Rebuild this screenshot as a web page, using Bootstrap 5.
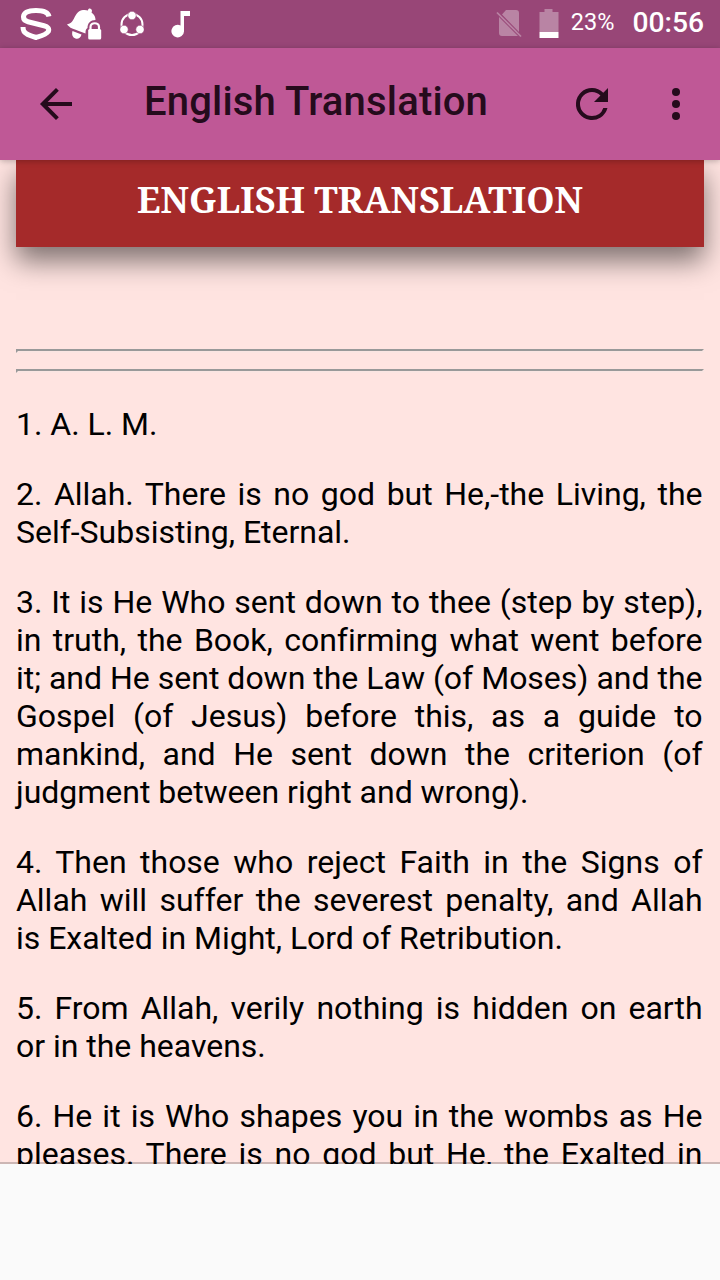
<!DOCTYPE html>
<html lang="en">
<head>
<meta charset="utf-8">
<meta name="viewport" content="width=device-width, initial-scale=1">
<title>English Translation</title>
<link rel="stylesheet" href="https://cdn.jsdelivr.net/npm/bootstrap@5.3.0/dist/css/bootstrap.min.css">
<style>
  body { font-family: Roboto, "Noto Sans", sans-serif; background: #fafafa; color: #000; }
  .screen { height: 1280px; }
  .status-bar { height: 48px; background: #984677; color: #fff; padding: 0 16px 0 20px; }
  .status-bar svg { display: block; }
  .battery-text { font-size: 23.5px; line-height: 44px; margin: -4px 0 0 12px; }
  .clock { font-size: 28.2px; font-weight: 500; line-height: 44px; margin: -3px 0 0 18px; }
  .app-bar { height: 112px; background: #bf5896; color: #250b1c; padding: 0 20px 0 32px; z-index: 2; box-shadow: 0 1px 6px rgba(0,0,0,.26); }
  .app-bar button { color: inherit; line-height: 0; }
  .app-title { font-size: 40px; font-weight: 500; line-height: 48px; letter-spacing: .17px; margin: 0 0 4px 64px; white-space: nowrap; }
  .reader { height: 1004px; background: #ffe4e1; padding: 0 16px; }
  .reader::after { content: ""; position: absolute; left: 0; right: 0; bottom: 0; height: 2px; background: rgba(0,0,0,.2); }
  .banner { height: 87px; background: #a52a2a; color: #fff; padding-top: 14px; box-shadow: 0 14px 26px rgba(0,0,0,.5); margin-bottom: 102px; }
  .banner h1 { font: bold 36px/52px "Noto Serif", "Liberation Serif", serif; margin: 0; }
  .rule { opacity: 1; height: 4px; border: 2px solid; border-color: #999 #fbe5e2 #fbe5e2 #999; margin: 0 0 16px; }
  .verses { padding: 16px 1.5px 0 0; }
  .verses p { font-size: 32px; line-height: 38px; letter-spacing: -.02px; margin-bottom: 32px; text-align: justify; }
  .verses p:last-child { text-align-last: justify; }
</style>
</head>
<body>
<div class="screen d-flex flex-column overflow-hidden">
  <div class="status-bar d-flex align-items-center flex-shrink-0">
    <svg width="32" height="34" viewBox="20 7 32 34" fill="none" stroke="#fff" stroke-width="5" stroke-linejoin="round"><path d="M49 16.500C48 12 43 10.500 36 10.500S24 12 23.500 16.500c-.2 3 1.500 4.500 4.500 5.200l16 4c4 1 5.500 3 4.300 5.800C46 35 41 36 36 37.500c-5-1.500-10-3-12-6q-1-2-1-4.500"/></svg>
    <svg style="margin-left:15px" width="36" height="34" viewBox="67 7 36 34" fill="#fff"><path d="M67 24.500c3-1 5-2 7-6 2-5 5-8 9-8.500 2-.3 3.500 0 5 .5 0-3 4-2.500 4 .5l-.5 1.500c3 2 4 5 4 7.500-5 0-8 3-8 8-2 1-2 3-2 5.500l-8-3c-5-2-7-2-10.500-6z"/><path d="M72.500 31l9 3.500c-1 4-4 5-6 4-3-1-4-4-3-7.500z"/><path d="M90.500 31v-4c0-5 8.500-5 8.500 0v4" fill="none" stroke="#fff" stroke-width="2.200"/><rect x="88.200" y="29" width="13" height="10.500" rx="1.500"/></svg>
    <svg style="margin-left:17px" width="24" height="26" viewBox="120 11 24 26" fill="#fff"><circle cx="132" cy="24.500" r="10.500" fill="none" stroke="#fff" stroke-width="2"/><g stroke="#984677" stroke-width=".6"><circle cx="132" cy="15.500" r="4.200"/><circle cx="124" cy="29.500" r="4.200"/><circle cx="140" cy="29.500" r="4.200"/></g></svg>
    <svg style="margin-left:27px" width="20" height="28" viewBox="171 10 20 28" fill="#fff"><path d="M180.500 11H190v5h-6v15.500a6.300 6.300 0 1 1-3.500-6z"/></svg>
    <svg class="ms-auto" width="28" height="30" viewBox="495 10 28 30"><path d="M506 11h10q3 0 3 3v19L502 15.500zM499 18l19 19H502q-3 0-3-3z" fill="#b984a4"/><path d="M497 13.500l24 24" stroke="#b984a4" stroke-width="1.700"/></svg>
    <svg style="margin-left:16px" width="20" height="30" viewBox="0 0 20 30"><path d="M.5 3h5V0h8v3h6v20H.5z" fill="#b984a4"/><path d="M.5 23h19v6H.5z" fill="#fff"/></svg>
    <span class="battery-text">23%</span>
    <span class="clock">00:56</span>
  </div>
  <header class="app-bar d-flex align-items-center position-relative flex-shrink-0">
    <button class="btn p-0 border-0" type="button" aria-label="Back"><svg width="48" height="48" viewBox="0 0 24 24" fill="none" stroke="currentColor" stroke-width="2"><path d="M20 12H5M12.700 4.700 5.400 12l7.300 7.300"/></svg></button>
    <h2 class="app-title">English Translation</h2>
    <button class="btn p-0 border-0 ms-auto" type="button" aria-label="Refresh"><svg width="48" height="48" viewBox="0 0 24 24" fill="currentColor"><path d="M17.650 6.350A7.958 7.958 0 0 0 12 4a8 8 0 1 0 7.730 10h-2.080A5.990 5.990 0 0 1 12 18a6 6 0 1 1 0-12c1.660 0 3.140.690 4.220 1.780L13 11h7V4z"/></svg></button>
    <button class="btn p-0 border-0" style="margin-left:36px" type="button" aria-label="More"><svg width="48" height="48" viewBox="0 0 24 24" fill="currentColor"><circle cx="12" cy="6" r="2"/><circle cx="12" cy="12" r="2"/><circle cx="12" cy="18" r="2"/></svg></button>
  </header>
  <main class="reader position-relative overflow-hidden flex-shrink-0">
    <div class="banner text-center"><h1>ENGLISH TRANSLATION</h1></div>
    <hr class="rule"><hr class="rule">
    <div class="verses">
      <p>1. A. L. M.</p>
      <p>2. Allah. There is no god but He,-the Living, the Self-Subsisting, Eternal.</p>
      <p>3. It is He Who sent down to thee (step by step), in truth, the Book, confirming what went before it; and He sent down the Law (of Moses) and the Gospel (of Jesus) before this, as a guide to mankind, and He sent down the criterion (of judgment between right and wrong).</p>
      <p>4. Then those who reject Faith in the Signs of Allah will suffer the severest penalty, and Allah is Exalted in Might, Lord of Retribution.</p>
      <p>5. From Allah, verily nothing is hidden on earth or in the heavens.</p>
      <p>6. He it is Who shapes you in the wombs as He pleases. There is no god but He, the Exalted in</p>
    </div>
  </main>
</div>
<script src="https://cdn.jsdelivr.net/npm/bootstrap@5.3.0/dist/js/bootstrap.bundle.min.js"></script>
</body>
</html>
